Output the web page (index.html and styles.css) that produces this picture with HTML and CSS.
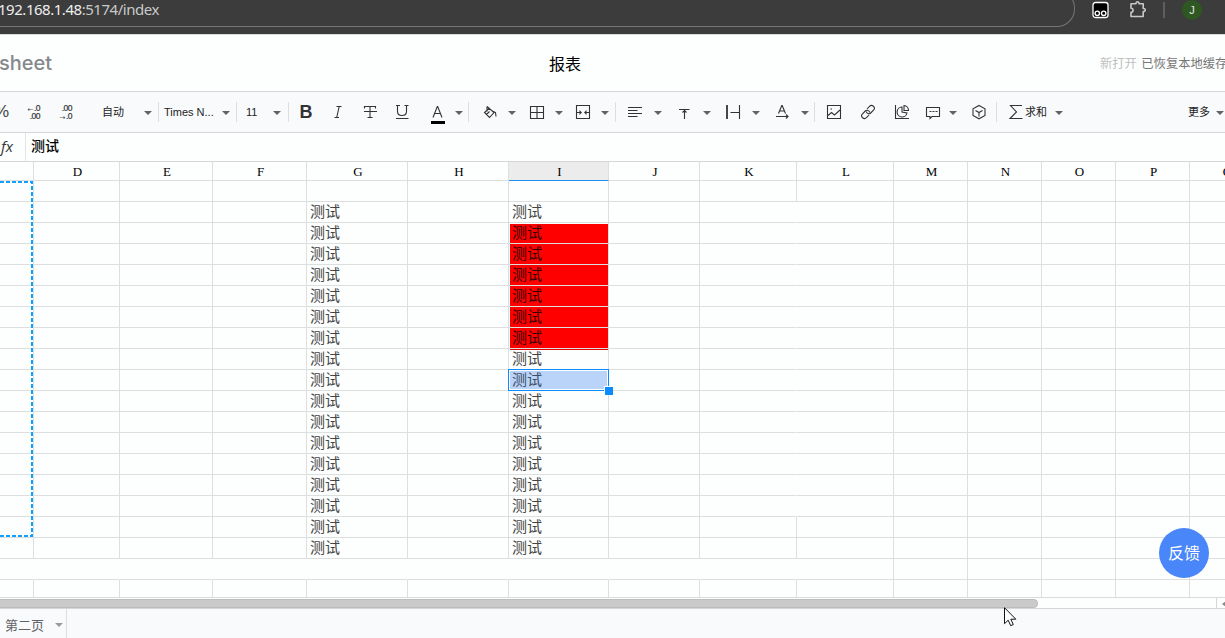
FILE: index.html
```html
<!DOCTYPE html>
<html lang="zh">
<head>
    <meta charset="UTF-8">
    <title>报表</title>
    <link rel="stylesheet" href="styles.css">
</head>
<body>
    <!-- Browser bar -->
    <div class="browser-bar">
        <div class="address"><span class="host">192.168.1.48</span>:5174/index</div>
        <svg class="ext" width="18" height="18" viewBox="0 0 18 18"><rect x="1" y="1.5" width="15" height="15" rx="2.5" fill="#000" stroke="#fff" stroke-width="1.3"/><g fill="#000" stroke="#fff" stroke-width="1.4"><circle cx="5.3" cy="12.3" r="2.2"/><circle cx="11.7" cy="12.3" r="2.2"/></g></svg>
        <svg class="puzzle" width="19" height="19" viewBox="0 0 19 19" fill="none" stroke="#c7c7c7" stroke-width="1.6"><path d="M2 3.8h5c-.3-2.6 3.300-2.600 3 0h4.200v4.700c2.700-.2 2.700 3.200 0 3v5H2v-4.200c2.800-.1 2.800-4 0-4.100z" stroke-linejoin="round"/></svg>
        <span class="bar-sep"></span>
        <span class="avatar">J</span>
    </div>

    <!-- Title -->
    <div class="header">
        <span class="logo">sheet</span>
        <span class="title">报表</span>
        <span class="status"><span class="new-open">新打开</span> 已恢复本地缓存</span>
    </div>

    <!-- Toolbar -->
    <div class="toolbar">
        <div class="group g-format">
            <span class="percent">%</span>
            <span class="decimal"><i>←.0</i><i class="end">.00</i></span>
            <span class="decimal"><i class="end">.00</i><i>→.0</i></span>
            <span class="label">自动</span>
            <span class="caret"></span>
        </div>
        <div class="group g-font">
            <span class="label">Times N...</span>
            <span class="caret"></span>
        </div>
        <div class="group g-size">
            <span class="label">11</span>
            <span class="caret"></span>
        </div>
        <div class="group g-text">
            <span class="btn bold">B</span>
            <span class="btn"><svg class="icon" viewBox="0 0 16 16"><path d="M6.500 2.500h5M4.500 13.500h4.500M9.200 2.500L6.700 13.500"/></svg></span>
            <span class="btn"><svg class="icon" viewBox="0 0 16 16"><path d="M2.500 4.500v-2h11v2M8 2.500v11M5.500 13.500h5M2 7.500h13"/></svg></span>
            <span class="btn"><svg class="icon" viewBox="0 0 16 16"><path d="M2 1.500h4M10.500 1.500h4M3.500 1.500v6q0 4 4.500 4t4.500-4v-6M2 14.500h12.500"/></svg></span>
            <span class="pair">
                <span class="btn"><svg class="icon font-color" viewBox="0 0 16 20"><path d="M3 12.500L7.300 1.500h.4l4.300 11M4.500 8.500h6"/><path class="swatch" d="M1 17.500h14"/></svg></span>
                <span class="caret"></span>
            </span>
        </div>
        <div class="group g-cell">
            <span class="pair"><span class="btn"><svg class="icon" viewBox="0 0 16 16"><path d="M5 2.500l7 6-4.500 5L2.500 8.500 7.500 4M5 2.500v5M10.500 7l3 1.500.5 4M4.500 10.500L7.500 7.500"/></svg></span><span class="caret"></span></span>
            <span class="pair"><span class="btn"><svg class="icon" viewBox="0 0 16 16"><path d="M1.500 2.500h13v12h-13zM8 2.500v12M1.500 8.500h13"/></svg></span><span class="caret"></span></span>
            <span class="pair"><span class="btn"><svg class="icon" viewBox="0 0 16 16"><path d="M1.500 1.500h13v13h-13zM2 8.500h3M14 8.500h-3"/><path d="M4.500 6l2.500 2.500L4.500 11zM11.500 6L9 8.500l2.500 2.500z" fill="#333" stroke="none"/></svg></span><span class="caret"></span></span>
        </div>
        <div class="group g-align">
            <span class="pair"><span class="btn"><svg class="icon" viewBox="0 0 16 16"><path d="M1 3.500h14M1 6.500h9.500M1 9.500h14M1 12.500h9.500"/></svg></span><span class="caret"></span></span>
            <span class="pair"><span class="btn"><svg class="icon" viewBox="0 0 16 16"><path d="M3 5.500h10.500M8.500 6v9M6.500 8.500l2-2 2 2"/></svg></span><span class="caret"></span></span>
            <span class="pair"><span class="btn"><svg class="icon" viewBox="0 0 16 16"><path d="M2 1v14" stroke-width="1.800"/><path d="M14.500 1v14M5.500 8.500h9"/></svg></span><span class="caret"></span></span>
            <span class="pair"><span class="btn"><svg class="icon" viewBox="0 0 16 16"><path d="M4.500 9.500L7.800 1.500h.4L11.500 9.500M5.500 7h5M2 12.500h12M12 10.500l2 2-2 2"/></svg></span><span class="caret"></span></span>
        </div>
        <div class="group g-insert">
            <span class="btn"><svg class="icon" viewBox="0 0 16 16"><path d="M1.500 1.500h13v13h-13zM2 11.500l3.500-3 3 2.500 5.500-5"/><path d="M4.500 5h1.500"/></svg></span>
            <span class="btn"><svg class="icon" viewBox="0 0 16 16"><path d="M7 5l2.500-2.700c2.500-2.300 6.500 1 4.200 3.700l-3 3C9 10.500 6.500 9.500 6.300 7.500M9 11l-2.500 2.700c-2.500 2.300-6.500-1-4.200-3.700l3-3C7 5.500 9.500 6.500 9.700 8.500"/></svg></span>
            <span class="btn"><svg class="icon" viewBox="0 0 16 16"><path d="M1.500 1v13.500H15M8 3a5 5 0 1 0 5 6L8 8zM10 1.500V6.500h4.500a5 5 0 0 0-4.500-5z"/></svg></span>
            <span class="pair"><span class="btn"><svg class="icon" viewBox="0 0 16 16"><path d="M1.500 3.500h13v9H7l-2 2v-2H1.500z"/><path d="M4.500 7.500h8" stroke-dasharray="2 1"/></svg></span><span class="caret"></span></span>
            <span class="btn"><svg class="icon" viewBox="0 0 16 16"><path d="M8 1.500l6 3.300v6.700l-6 3.300-6-3.300V4.800zM4.500 6.500L8 8.500l3.500-2M8 8.500V12.500"/></svg></span>
        </div>
        <div class="group g-sum">
            <svg class="icon" viewBox="0 0 16 16"><path d="M14 1.500H2.500l6 6.500-6.500 6.500h12.500"/></svg>
            <span class="label">求和</span>
            <span class="caret"></span>
        </div>
        <div class="more"><span class="label">更多</span><span class="caret"></span></div>
    </div>

    <!-- Formula bar -->
    <div class="formula-bar">
        <span class="fx">fx</span>
        <span class="formula">测试</span>
    </div>

    <!-- Grid, rows are filled in by script.js -->
    <div class="sheet">
        <div class="rows" id="rows"></div>
        <svg class="copy-range" width="34" height="358"><path d="M0 2h32v354H0"/></svg>
    </div>

    <div class="scrollbar">
        <div class="thumb"></div>
        <div class="scroll-end"><span class="arrow-left"></span></div>
    </div>

    <div class="tabs">
        <div class="tab">第二页<span class="caret"></span></div>
    </div>

    <div class="feedback">反馈</div>
    <svg class="cursor" width="14" height="21" viewBox="0 0 14 21"><path d="M.5.700v16l3.700-3.500 2.500 5.500 2.600-1.200-2.500-5.300h5z" fill="#fff" stroke="#111"/></svg>

    <script src="script.js"></script>
</body>
</html>
```
FILE: styles.css
```css
* {
    box-sizing: border-box;
}

body {
    margin: 0;
    width: 1225px;
    height: 638px;
    overflow: hidden;
    position: relative;
    background: #fdfefe;
    font-family: "Liberation Sans", "Noto Sans CJK SC", sans-serif;
    color: #333;
}

/* Browser bar */
.browser-bar {
    display: flex;
    height: 35px;
    background: #3c3c3c;
    border-bottom: 1px solid #d9d9d9;
    overflow: hidden;
}

.address {
    width: 1075px;
    height: 37px;
    margin-top: -10px;
    padding-top: 9px;
    border: 1px solid #767676;
    border-left: none;
    border-radius: 0 18px 18px 0;
    font: 15px/18px "Noto Sans", sans-serif;
    color: #c9c9c9;
    text-indent: -2px;
    letter-spacing: -0.47px;
}

.host {
    color: #eee;
}

.ext {
    margin: 1px 0 0 17px;
}

.puzzle {
    margin: 0 0 0 19px;
}

.bar-sep {
    width: 2px;
    height: 16px;
    margin: 2px 0 0 15px;
    background: #5e5e5e;
}

.avatar {
    width: 20px;
    height: 20px;
    margin-left: 17px;
    border-radius: 50%;
    background: #2f5722;
    color: #e4e4e4;
    font: 11px/20px "Liberation Sans", sans-serif;
    text-align: center;
}

/* Title */
.header {
    display: grid;
    grid-template-columns: 549px 551px 1fr;
    align-items: center;
    height: 57px;
    border-bottom: 1px solid #d4d6d8;
    white-space: nowrap;
}

.logo {
    margin-left: -1px;
    font: 500 20px/24px Inter, sans-serif;
    color: #85888b;
}

.title {
    font-size: 16px;
    color: #000;
}

.status {
    font-size: 12.300px;
    color: #777;
    word-spacing: 1px;
}

.new-open {
    color: #c0c0c0;
}

/* Toolbar */
.toolbar {
    display: flex;
    align-items: center;
    height: 41px;
    background: #f9fafc;
    border-bottom: 1px solid #d4d6d8;
    white-space: nowrap;
}

.group {
    display: flex;
    align-items: center;
    flex: none;
    height: 20px;
    border-right: 1px solid #dcdee1;
}

.g-format {
    width: 159px;
}

.g-font {
    width: 78px;
    padding: 0 6px 0 5px;
    justify-content: space-between;
}

.g-size {
    width: 52px;
    padding: 0 7px 0 9px;
    justify-content: space-between;
}

.g-text {
    width: 180px;
    padding-left: 1px;
}

.g-text .pair {
    margin-left: 4px;
    gap: 1px;
}

.g-cell {
    width: 147px;
    padding-left: 5px;
    gap: 5px;
}

.g-cell .pair:last-child {
    margin-left: -1px;
}

.g-align {
    width: 199px;
    padding-left: 3px;
    gap: 6px;
}

.g-align .pair {
    gap: 3px;
}

.g-insert {
    width: 182px;
    padding-left: 3px;
    gap: 2px;
}

.g-insert .pair {
    gap: 0;
    margin: 0 4px 0 -3px;
}

.g-sum {
    padding-left: 11px;
    border-right: none;
}

.g-sum .label {
    margin: 0 8px 0 1px;
}

.pair {
    display: flex;
    align-items: center;
    gap: 2px;
}

.btn {
    display: flex;
    align-items: center;
    justify-content: center;
    width: 32px;
    height: 20px;
}

.bold {
    font-size: 18px;
    font-weight: bold;
}

.icon {
    width: 16px;
    height: 16px;
    fill: none;
    stroke: #333;
    stroke-width: 1.1;
}

.font-color {
    height: 20px;
    margin-top: 6px;
}

.font-color .swatch {
    stroke: #000;
    stroke-width: 3;
}

.caret {
    flex: none;
    width: 8px;
    height: 4px;
    margin-top: 2px;
    background: #606266;
    clip-path: polygon(0 0, 100% 0, 50% 100%);
}

.label {
    font-size: 11px;
    line-height: 18px;
    color: #222;
}

.percent {
    width: 18px;
    margin-left: -6px;
    font-size: 17px;
    color: #444;
}

.decimal {
    width: 33px;
    padding-left: 9px;
    display: flex;
    flex-direction: column;
    align-items: center;
    font-size: 8.500px;
    line-height: 8px;
    -webkit-text-stroke: 0.2px #333;
}

.decimal + .decimal {
    margin-left: -1px;
}

.decimal i {
    font-style: normal;
    width: 14px;
    letter-spacing: -0.5px;
}

.decimal .end {
    text-align: right;
}

.g-format .label {
    width: 42px;
    margin-left: 25px;
}

.more {
    display: flex;
    align-items: center;
    gap: 6px;
    margin-left: 125px;
}

/* Formula bar */
.formula-bar {
    display: flex;
    align-items: center;
    height: 29px;
    border-bottom: 1px solid #d4d6d8;
}

.fx {
    width: 26px;
    height: 28px;
    padding-left: 1px;
    border-right: 1px solid #e2e4e6;
    font: italic 15px/27px "Open Sans", sans-serif;
}

.formula {
    padding: 0 0 2px 5px;
    font-size: 14px;
    font-weight: 500;
    line-height: 24px;
    color: #000;
}

/* Grid */
.sheet {
    position: relative;
    height: 436px;
    overflow: hidden;
    border-bottom: 1px solid #d9dbdb;
}

.row {
    display: grid;
    grid-template-columns: 34px 86px 93px 94px 101px 101px 100px 91px 97px 97px 74px 74px 74px 74px 74px;
    height: 21px;
}

.head {
    height: 19px;
    font: 13px/19px "Liberation Serif", serif;
    text-align: center;
    color: #000;
}

.cell {
    border-right: 1px solid #dcdfde;
    border-bottom: 1px solid #dcdfde;
    padding-left: 3px;
    font-size: 15px;
    line-height: 20px;
    color: #444;
    white-space: nowrap;
}

.head .cell {
    height: 19px;
    padding: 0 0 0 2px;
    font: inherit;
    color: inherit;
}

.head .active {
    background: #ececec;
    border-bottom-color: #1e90f5;
}

.no-right {
    border-right-color: transparent;
}

.red {
    background: linear-gradient(#f00, #f00) 0 0 no-repeat content-box;
    padding-left: 1px;
    text-indent: 2px;
    color: #300;
}

.red-first {
    padding-top: 1px;
    line-height: 18px;
}

.red-after {
    background: linear-gradient(#d00, #d00) 1px 0 / 100% 1px no-repeat;
}

.selected {
    position: relative;
    background: #b9d4f8;
    color: #3f4d68;
}

.selected::before {
    content: "";
    position: absolute;
    inset: -1px -1px -1px -1px;
    border: 1px solid #0a8bff;
    box-shadow: inset 0 0 0 1px #fff;
}

.selected::after {
    content: "";
    position: absolute;
    right: -5px;
    bottom: -5px;
    width: 8px;
    height: 8px;
    border: 1px solid #fff;
    border-width: 1px 0 0 1px;
    background: #0a8bff;
}

.copy-range {
    position: absolute;
    left: 0;
    top: 18px;
    fill: none;
    stroke: #12a0ff;
    stroke-width: 2;
    stroke-dasharray: 4 2;
}

/* Scrollbar and tabs */
.scrollbar {
    display: flex;
    justify-content: space-between;
    height: 11px;
    border-bottom: 1px solid #d4d6d8;
}

.thumb {
    width: 1038px;
    height: 9px;
    margin-top: 1px;
    background: #cacaca;
    border: 1px solid #bcbcbc;
    border-left: none;
    border-radius: 0 5px 5px 0;
}

.scroll-end {
    width: 9px;
    padding: 3px 0 0 5px;
    border-left: 1px solid #d4d6d8;
}

.arrow-left {
    display: block;
    width: 4px;
    height: 6px;
    background: #888;
    clip-path: polygon(0 50%, 100% 0, 100% 100%);
}

.tabs {
    height: 29px;
    background: #f9fafc;
}

.tab {
    display: flex;
    align-items: center;
    gap: 11px;
    width: 67px;
    height: 29px;
    padding: 5px 0 0 5px;
    border-right: 1px solid #dcdee1;
    font-size: 13px;
    line-height: 22px;
    color: #606266;
    white-space: nowrap;
}

.tab .caret {
    background: #999;
    margin-top: -2px;
}

.feedback {
    position: absolute;
    left: 1159px;
    top: 528px;
    width: 50px;
    height: 50px;
    border-radius: 50%;
    background: #4886f9;
    color: #fff;
    font-size: 16px;
    line-height: 51px;
    text-align: center;
}

.cursor {
    position: absolute;
    left: 1004px;
    top: 607px;
}
```
FILE: script.js
```javascript
const letters = ['', 'D', 'E', 'F', 'G', 'H', 'I', 'J', 'K', 'L', 'M', 'N', 'O', 'P', 'Q'];
const G = 4, I = 6, K = 8, L = 9;
const rows = document.getElementById('rows');

function addRow(className) {
    const row = document.createElement('div');
    row.className = className;
    rows.appendChild(row);
    return row;
}

function addCell(row, text, classes) {
    const cell = document.createElement('div');
    cell.className = ['cell', ...classes].join(' ');
    cell.textContent = text;
    row.appendChild(cell);
}

const head = addRow('row head');
letters.forEach((letter, c) => addCell(head, letter, c === I ? ['active'] : []));

for (let r = 1; r <= 20; r++) {
    const row = addRow('row');
    letters.forEach((_, c) => {
        const classes = [];
        const filled = (c === G || c === I) && r >= 2 && r <= 18;
        if (c === I && r >= 3 && r <= 8) classes.push('red');
        if (c === I && r === 3) classes.push('red-first');
        if (c === I && r === 9) classes.push('red-after');
        if (c === I && r === 10) classes.push('selected');
        // K and L share one area in rows 2-16, row 19 is open up to L
        if (c === K && r >= 2 && r <= 16) classes.push('no-right');
        if (r === 19 && c < L) classes.push('no-right');
        addCell(row, filled ? '测试' : '', classes);
    });
}
```
